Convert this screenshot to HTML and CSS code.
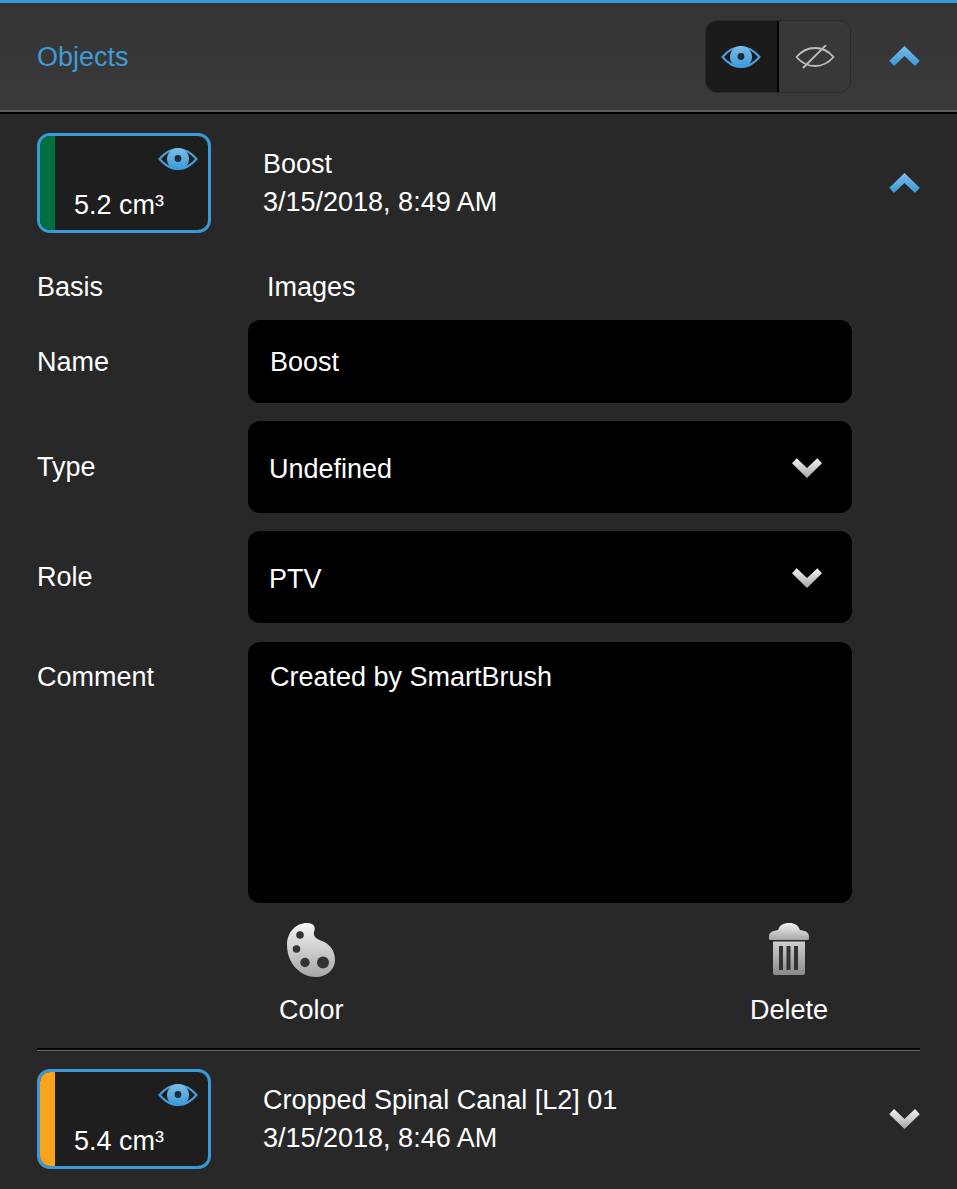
FILE: index.html
```html
<!DOCTYPE html>
<html lang="en">
<head>
<meta charset="utf-8">
<title>Objects</title>
<link rel="stylesheet" href="styles.css">
</head>
<body>
<svg class="sprite" xmlns="http://www.w3.org/2000/svg">
  <defs>
    <linearGradient id="gb" x1="0" y1="0" x2="0" y2="1"><stop offset="0" stop-color="#7cbde8"/><stop offset="1" stop-color="#3a98d8"/></linearGradient>
    <linearGradient id="gw" x1="0" y1="0" x2="0" y2="1"><stop offset="0" stop-color="#f4f4f4"/><stop offset="1" stop-color="#a6a6a6"/></linearGradient>
    <linearGradient id="gt" x1="0" y1="0" x2="0" y2="1"><stop offset="0" stop-color="#cfcfcf"/><stop offset="1" stop-color="#8a8a8a"/></linearGradient>
    <symbol id="eye" viewBox="0 0 40 24">
      <path d="M1.500 12C7 5.500 13 2 20 2s13 3.500 18.500 10C33 18.500 27 22 20 22S7 18.500 1.500 12z" fill="none" stroke="#4a9fd8" stroke-width="2"/>
      <circle cx="20" cy="12" r="11" fill="url(#gb)"/>
      <circle cx="20" cy="11.500" r="3.400" fill="#1c2a36"/>
    </symbol>
    <symbol id="eye-off" viewBox="0 0 40 24">
      <path d="M1.500 12C7 5.500 13 3 20 3s13 2.500 18.500 9C33 18.500 27 21 20 21S7 18.500 1.500 12z" fill="none" stroke="#bdbdbd" stroke-width="1.800"/>
      <path d="M8 23L31 0" fill="none" stroke="#bdbdbd" stroke-width="1.800"/>
    </symbol>
    <symbol id="up" viewBox="0 0 32 22"><path d="M16 0L32 15.500 27 21 16 10.500 5 21 0 15.500z" fill="url(#gb)"/></symbol>
    <symbol id="down-white" viewBox="0 0 32 22"><path d="M16 21L32 5.500 27 0 16 10.500 5 0 0 5.500z" fill="url(#gw)"/></symbol>
    <symbol id="palette" viewBox="0 0 48 54">
      <path d="M20 0C27 0 29 4 27 9c-1 5 3 7 8 9 8 3 13 10 13 19 0 10-9 17-19 17C14 54 0 41 0 22 0 9 9 0 20 0z" fill="url(#gw)"/>
      <circle cx="13" cy="12" r="3.800" fill="#333"/>
      <circle cx="9.500" cy="26" r="3.800" fill="#333"/>
      <circle cx="18" cy="39.500" r="4.700" fill="#333"/>
      <circle cx="36" cy="39.500" r="6" fill="#333"/>
    </symbol>
    <symbol id="trash" viewBox="0 0 40 52">
      <path d="M0 14c0-4 2-6 9-7C11 2 14 0 20 0s9 2 11 7c7 1 9 3 9 7v2a1 1 0 0 1-1 1H1a1 1 0 0 1-1-1z" fill="url(#gw)"/>
      <path d="M4 18.500h32V50a2 2 0 0 1-2 2H6a2 2 0 0 1-2-2z" fill="url(#gt)"/>
      <rect x="10" y="23" width="4" height="24" fill="#333"/>
      <rect x="17.500" y="23" width="4" height="24" fill="#333"/>
      <rect x="25" y="23" width="4" height="24" fill="#333"/>
    </symbol>
  </defs>
</svg>

<header class="panel-head">
  <h1 class="panel-title">Objects</h1>
  <div class="toggle">
    <button class="toggle-btn toggle-on" type="button"><svg class="toggle-icon"><use href="#eye"/></svg></button>
    <button class="toggle-btn" type="button"><svg class="toggle-icon"><use href="#eye-off"/></svg></button>
  </div>
  <svg class="chevron"><use href="#up"/></svg>
</header>

<section class="object">
  <div class="card">
    <span class="swatch swatch-green"></span>
    <div class="card-body">
      <svg class="card-eye"><use href="#eye"/></svg>
      <span class="card-volume">5.2 cm³</span>
    </div>
  </div>
  <div class="object-info">
    <div>Boost</div>
    <div>3/15/2018, 8:49 AM</div>
  </div>
  <svg class="chevron"><use href="#up"/></svg>
</section>

<form class="details">
  <div class="label label-basis">Basis</div>
  <div class="basis-value">Images</div>

  <label class="label label-name">Name</label>
  <div class="field field-name">Boost</div>

  <label class="label label-select">Type</label>
  <div class="field field-select">Undefined<svg class="select-chevron"><use href="#down-white"/></svg></div>

  <label class="label label-select">Role</label>
  <div class="field field-select">PTV<svg class="select-chevron"><use href="#down-white"/></svg></div>

  <label class="label label-comment">Comment</label>
  <div class="field field-comment">Created by SmartBrush</div>

  <div class="actions">
    <button class="action" type="button"><svg class="action-palette"><use href="#palette"/></svg><span>Color</span></button>
    <button class="action" type="button"><svg class="action-trash"><use href="#trash"/></svg><span>Delete</span></button>
  </div>
</form>

<hr class="divider">

<section class="object object-second">
  <div class="card">
    <span class="swatch swatch-orange"></span>
    <div class="card-body">
      <svg class="card-eye"><use href="#eye"/></svg>
      <span class="card-volume">5.4 cm³</span>
    </div>
  </div>
  <div class="object-info">
    <div>Cropped Spinal Canal [L2] 01</div>
    <div>3/15/2018, 8:46 AM</div>
  </div>
  <svg class="chevron"><use href="#down-white"/></svg>
</section>
</body>
</html>
```

FILE: styles.css
```css
* { box-sizing: border-box; }

html, body { margin: 0; height: 100%; }

body {
  background: #282828;
  color: #fff;
  font-family: "Liberation Sans", Arial, sans-serif;
  font-size: 27px;
  line-height: 38px;
  overflow: hidden;
}

.sprite { display: block; width: 0; height: 0; }

.panel-head {
  display: flex;
  align-items: center;
  height: 114px;
  padding: 0 37px 2px;
  border-top: 3px solid #3a9ad9;
  border-bottom: 2px solid #000;
  background: linear-gradient(#343434, #3a3a3a);
  box-shadow: inset 0 -2px 0 #5e5e5e;
}

.panel-title {
  flex: 1;
  margin: 0;
  color: #3f9bd8;
  font-size: 27px;
  font-weight: 400;
}

.toggle {
  display: flex;
  width: 146px;
  height: 73px;
  margin-right: 38px;
  border: 1px solid #2a2a2a;
  border-radius: 12px;
  overflow: hidden;
}

.toggle-btn {
  display: flex;
  flex: 1;
  align-items: center;
  justify-content: center;
  padding: 0;
  border: 0;
  background: #383838;
}

.toggle-on {
  flex: 0 0 73px;
  padding-right: 2px;
  background: #1b1b1b;
  border-right: 2px solid #000;
}

.toggle-icon { width: 40px; height: 24px; }

.chevron { flex: none; width: 31px; height: 21px; }

.object {
  display: flex;
  align-items: center;
  height: 100px;
  margin-top: 19px;
  padding: 0 37px;
}

.card {
  display: flex;
  flex: none;
  width: 174px;
  height: 100px;
  border: 3px solid #3a9ad9;
  border-radius: 13px;
  overflow: hidden;
  background: #1e1e1e;
}

.swatch { flex: none; width: 15px; }
.swatch-green { background: #007040; }
.swatch-orange { background: #fba31c; }

.card-body {
  display: flex;
  flex: 1;
  flex-direction: column;
  justify-content: space-between;
  padding: 11px 10px 6px 19px;
}

.card-eye { align-self: flex-end; width: 40px; height: 24px; }

.card-volume { line-height: 38px; white-space: nowrap; }

.object-info {
  flex: 1;
  margin-left: 52px;
}

.object-info div { height: 38px; }

.details {
  display: grid;
  grid-template-columns: 211px 604px;
  grid-template-rows: 34px 83px 92px 92px 262px auto;
  row-gap: 18px;
  margin-top: 35px;
  padding-bottom: 19px;
  padding-left: 37px;
}

.label { display: block; }
.basis-value { padding-left: 19px; }
.label-name { padding-top: 23px; }
.label-select { padding-top: 27px; }
.label-comment { padding-top: 17px; }

.field {
  display: flex;
  align-items: center;
  padding: 0 30px 0 22px;
  border-radius: 12px;
  background: #000;
}

.field-select { justify-content: space-between; padding-top: 3px; padding-left: 21px; }
.field-comment { align-items: flex-start; margin-top: 1px; padding-top: 16px; }

.select-chevron { width: 30px; height: 21px; }

.actions {
  display: flex;
  grid-column: 2;
  justify-content: space-between;
  margin-top: 2px;
  padding: 0 24px 0 31px;
}

.action {
  display: flex;
  flex-direction: column;
  align-items: center;
  padding: 0;
  border: 0;
  background: none;
  color: #fff;
  font: inherit;
}

.action span { margin-top: 14px; }

.action-palette { width: 48px; height: 54px; }
.action-trash { width: 40px; height: 52px; margin-bottom: 2px; }

.divider {
  height: 3px;
  margin: 0 37px;
  border: 0;
  border-top: 1px solid #000;
  border-bottom: 1px solid #666;
  background: #111;
}

.object-second { margin-top: 18px; }
```
